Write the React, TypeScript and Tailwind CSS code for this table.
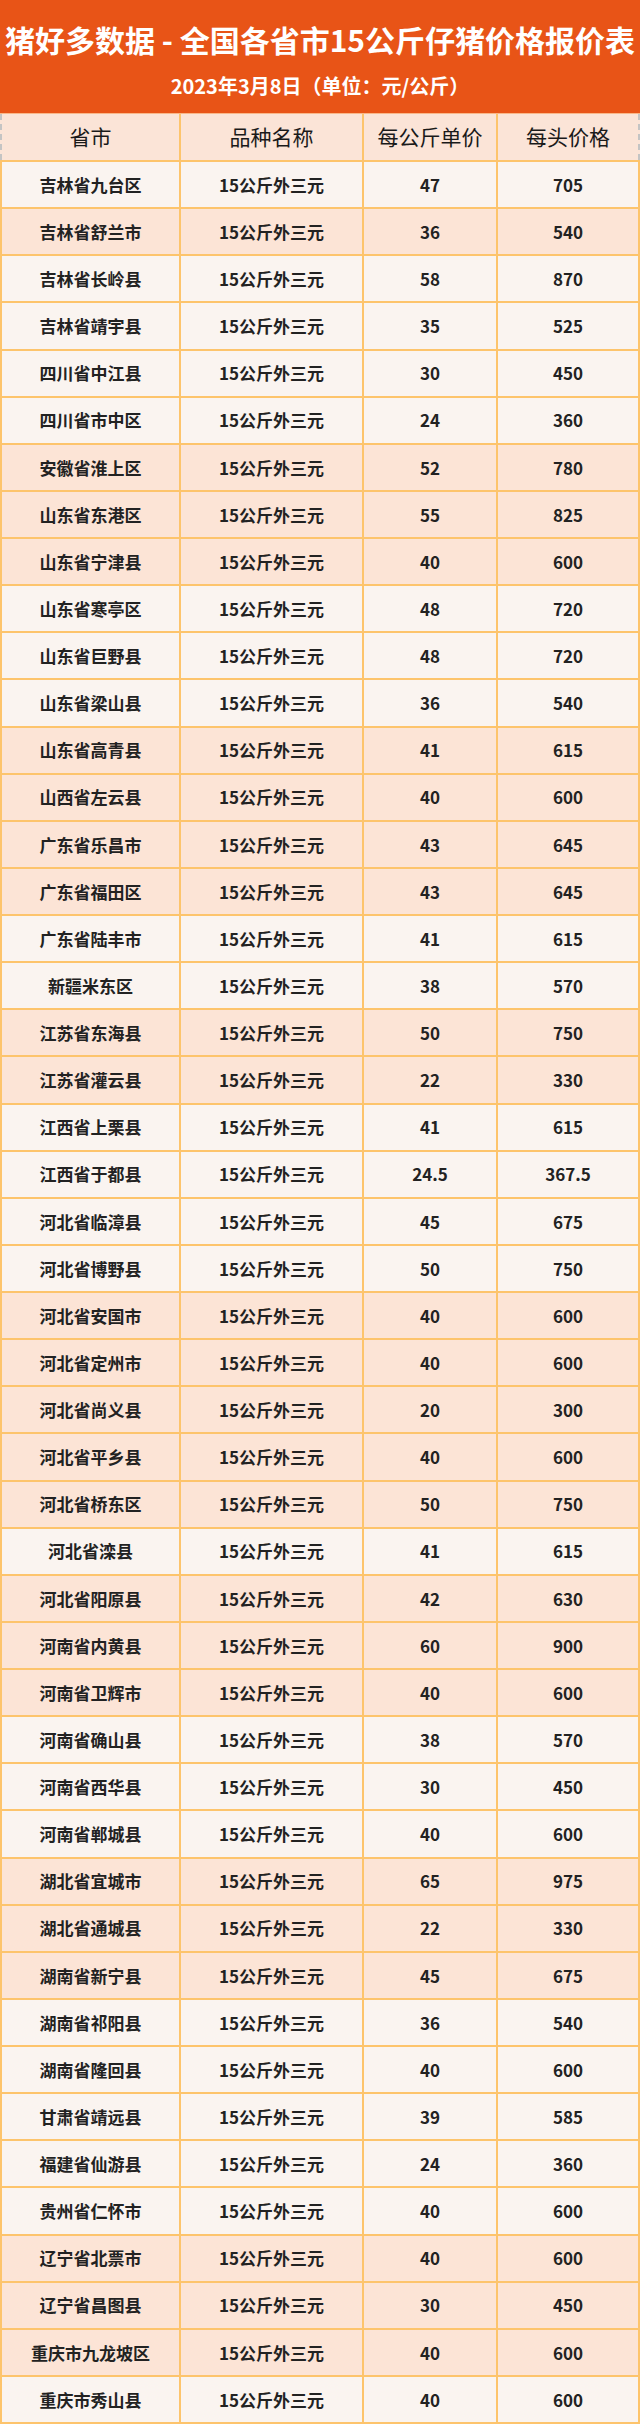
import React from "react";

type Row = [string, string, string, boolean];

const rows: Row[] = [
  ["吉林省九台区", "47", "705", false],
  ["吉林省舒兰市", "36", "540", true],
  ["吉林省长岭县", "58", "870", false],
  ["吉林省靖宇县", "35", "525", false],
  ["四川省中江县", "30", "450", false],
  ["四川省市中区", "24", "360", false],
  ["安徽省淮上区", "52", "780", true],
  ["山东省东港区", "55", "825", true],
  ["山东省宁津县", "40", "600", true],
  ["山东省寒亭区", "48", "720", false],
  ["山东省巨野县", "48", "720", false],
  ["山东省梁山县", "36", "540", false],
  ["山东省高青县", "41", "615", true],
  ["山西省左云县", "40", "600", true],
  ["广东省乐昌市", "43", "645", true],
  ["广东省福田区", "43", "645", true],
  ["广东省陆丰市", "41", "615", false],
  ["新疆米东区", "38", "570", false],
  ["江苏省东海县", "50", "750", true],
  ["江苏省灌云县", "22", "330", true],
  ["江西省上栗县", "41", "615", false],
  ["江西省于都县", "24.5", "367.5", false],
  ["河北省临漳县", "45", "675", false],
  ["河北省博野县", "50", "750", false],
  ["河北省安国市", "40", "600", true],
  ["河北省定州市", "40", "600", true],
  ["河北省尚义县", "20", "300", true],
  ["河北省平乡县", "40", "600", true],
  ["河北省桥东区", "50", "750", true],
  ["河北省滦县", "41", "615", false],
  ["河北省阳原县", "42", "630", true],
  ["河南省内黄县", "60", "900", true],
  ["河南省卫辉市", "40", "600", true],
  ["河南省确山县", "38", "570", false],
  ["河南省西华县", "30", "450", false],
  ["河南省郸城县", "40", "600", false],
  ["湖北省宜城市", "65", "975", true],
  ["湖北省通城县", "22", "330", true],
  ["湖南省新宁县", "45", "675", true],
  ["湖南省祁阳县", "36", "540", false],
  ["湖南省隆回县", "40", "600", false],
  ["甘肃省靖远县", "39", "585", false],
  ["福建省仙游县", "24", "360", false],
  ["贵州省仁怀市", "40", "600", false],
  ["辽宁省北票市", "40", "600", true],
  ["辽宁省昌图县", "30", "450", true],
  ["重庆市九龙坡区", "40", "600", true],
  ["重庆市秀山县", "40", "600", false],
];

const font = { fontFamily: '"Noto Sans CJK SC", "Noto Sans", sans-serif' };

function P({ children }: { children: React.ReactNode }) {
  return <span className="inline-block w-[20px] text-center">{children}</span>;
}

export default function App() {
  return (
    <div className="w-[640px] bg-white" style={font}>
      <div className="h-[113px] bg-[#E85417] flex flex-col items-center pt-[21px] text-white">
        <div className="text-[30px] leading-[36px] font-bold whitespace-nowrap">
          猪好多数据 - 全国各省市15公斤仔猪价格报价表
        </div>
        <div className="mt-[15px] text-[20px] leading-[28px] font-bold whitespace-nowrap">
          2023年3月8日<P>（</P>单位<P>：</P>元/公斤<P>）</P>
        </div>
      </div>

      <div className="flex h-[49px] bg-[#FBE4D7] border-t border-t-[#F9B889] border-b-2 border-b-[#FDC46C] text-[21px] text-[#1a1a1a]">
        <div className="w-[181px] flex items-center justify-center border-l-2 border-l-[#C4C4C4] [border-left-style:dashed] border-r-2 border-r-[#FDC46C]">
          省市
        </div>
        <div className="w-[183px] flex items-center justify-center border-r-2 border-r-[#FDC46C]">
          品种名称
        </div>
        <div className="w-[134px] flex items-center justify-center border-r-2 border-r-[#FDC46C]">
          每公斤单价
        </div>
        <div className="flex-1 flex items-center justify-center border-r-2 border-r-[#C4C4C4] [border-right-style:dashed]">
          每头价格
        </div>
      </div>

      {rows.map(([name, price, head, pink], i) => (
        <div
          key={i}
          className={`flex h-[47.125px] border-b-2 border-b-[#FDC46C] text-[17px] font-bold text-[#222] ${
            pink ? "bg-[#FCE4D6]" : "bg-[#FAF4F0]"
          }`}
        >
          <div className="w-[181px] flex items-center justify-center border-l-2 border-l-[#FDC46C] border-r-2 border-r-[#FDC46C]">
            {name}
          </div>
          <div className="w-[183px] flex items-center justify-center border-r-2 border-r-[#FDC46C]">
            15公斤外三元
          </div>
          <div className="w-[134px] flex items-center justify-center border-r-2 border-r-[#FDC46C]">
            {price}
          </div>
          <div className="flex-1 flex items-center justify-center border-r-2 border-r-[#FDC46C]">
            {head}
          </div>
        </div>
      ))}
    </div>
  );
}
